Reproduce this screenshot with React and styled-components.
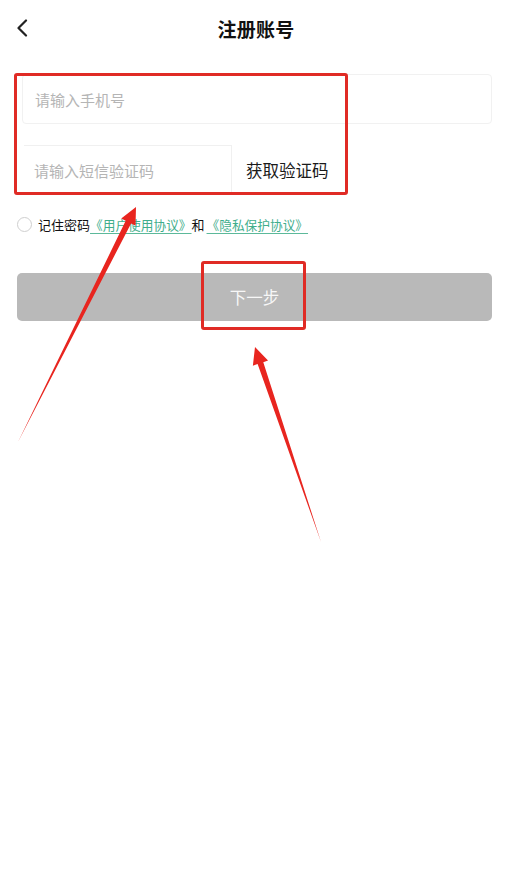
import React from "react";
import styled, { createGlobalStyle } from "styled-components";

const GlobalStyle = createGlobalStyle`
  html, body {
    margin: 0;
    padding: 0;
    background: #fff;
    font-family: "Noto Sans CJK SC", "Noto Sans", sans-serif;
  }
`;

const Page = styled.div`
  position: relative;
  width: 514px;
  height: 890px;
  background: #fff;
  overflow: hidden;
`;

const Header = styled.div`
  position: relative;
  height: 56px;
  display: flex;
  align-items: center;
  justify-content: center;
  padding-left: 0;
`;

const BackButton = styled.div`
  position: absolute;
  left: 12px;
  top: 17px;
  width: 20px;
  height: 22px;
  display: flex;
  align-items: center;
  justify-content: center;
`;

const Title = styled.h1`
  margin: 0 0 0 -2px;
  font-size: 19px;
  font-weight: 700;
  color: #111;
  letter-spacing: 0.3px;
`;

const Form = styled.div`
  padding: 18px 22px 0 22px;
  display: flex;
  flex-direction: column;
`;

const PhoneField = styled.div`
  height: 48px;
  border: 1px solid #f1f1f1;
  border-radius: 4px;
  display: flex;
  align-items: center;
  padding-left: 12px;
`;

const Placeholder = styled.span`
  font-size: 15px;
  color: #b5b5b5;
`;

const CodeRow = styled.div`
  margin-top: 21px;
  display: flex;
  align-items: stretch;
  height: 50px;
`;

const CodeField = styled.div`
  width: 208px;
  margin-left: 2px;
  border-top: 1px solid #f0f0f0;
  border-right: 1px solid #f0f0f0;
  display: flex;
  align-items: center;
  padding-left: 10px;
  box-sizing: border-box;
`;

const GetCode = styled.div`
  display: flex;
  align-items: center;
  padding-left: 14px;
  font-size: 16.5px;
  color: #1a1a1a;
`;

const AgreementRow = styled.div`
  margin: 20px 0 0 -5px;
  display: flex;
  align-items: center;
  font-size: 13px;
  color: #111;
`;

const Radio = styled.span`
  width: 13px;
  height: 13px;
  border-radius: 50%;
  border: 1px solid #cfcfcf;
  margin-right: 6px;
`;

const Link = styled.span`
  color: #3fae8c;
  font-size: 12.7px;
  text-decoration: underline;
  text-underline-offset: 3px;
  text-decoration-color: #5cb99a;
  margin-left: ${(p) => p.$gap || 0}px;
`;

const NextButton = styled.div`
  margin: 39px 0 0 -5px;
  width: 475px;
  height: 48px;
  border-radius: 5px;
  background: #b9b9b9;
  color: #f7f7f7;
  font-size: 16.5px;
  display: flex;
  align-items: center;
  justify-content: center;
`;

const HighlightBox = styled.div`
  position: absolute;
  left: ${(p) => p.$x}px;
  top: ${(p) => p.$y}px;
  width: ${(p) => p.$w}px;
  height: ${(p) => p.$h}px;
  border: 3px solid #e02b25;
  border-radius: 3px;
  box-sizing: border-box;
  pointer-events: none;
`;

const Annotations = styled.svg`
  position: absolute;
  left: 0;
  top: 0;
  width: 514px;
  height: 890px;
  pointer-events: none;
`;

function Arrow({ x1, y1, x2, y2 }) {
  const dx = x2 - x1;
  const dy = y2 - y1;
  const len = Math.hypot(dx, dy);
  const ux = dx / len;
  const uy = dy / len;
  const px = -uy;
  const py = ux;
  const head = 17;
  const hw = 8;
  const bx = x2 - ux * head;
  const by = y2 - uy * head;
  const points = [
    `${x1},${y1}`,
    `${bx + px * 3},${by + py * 3}`,
    `${bx + px * hw},${by + py * hw}`,
    `${x2},${y2}`,
    `${bx - px * hw},${by - py * hw}`,
    `${bx - px * 3},${by - py * 3}`,
  ].join(" ");
  return <polygon points={points} fill="#e8251f" />;
}

export default function App() {
  return (
    <Page>
      <GlobalStyle />
      <Header>
        <BackButton>
          <svg width="12" height="18" viewBox="0 0 12 18">
            <path d="M10 1.5 L2.5 9 L10 16.5" fill="none" stroke="#222" strokeWidth="2.2" strokeLinecap="round" strokeLinejoin="round" />
          </svg>
        </BackButton>
        <Title>注册账号</Title>
      </Header>
      <Form>
        <PhoneField>
          <Placeholder>请输入手机号</Placeholder>
        </PhoneField>
        <CodeRow>
          <CodeField>
            <Placeholder>请输入短信验证码</Placeholder>
          </CodeField>
          <GetCode>获取验证码</GetCode>
        </CodeRow>
        <AgreementRow>
          <Radio />
          记住密码
          <Link>《用户使用协议》</Link>
          和
          <Link $gap={2}>《隐私保护协议》</Link>
        </AgreementRow>
        <NextButton>下一步</NextButton>
      </Form>
      <HighlightBox $x={14} $y={73} $w={334} $h={122} />
      <HighlightBox $x={201} $y={261} $w={105} $h={69} />
      <Annotations viewBox="0 0 514 890">
        <Arrow x1={18} y1={442} x2={136} y2={207} />
        <Arrow x1={321} y1={542} x2={255} y2={347} />
      </Annotations>
    </Page>
  );
}
